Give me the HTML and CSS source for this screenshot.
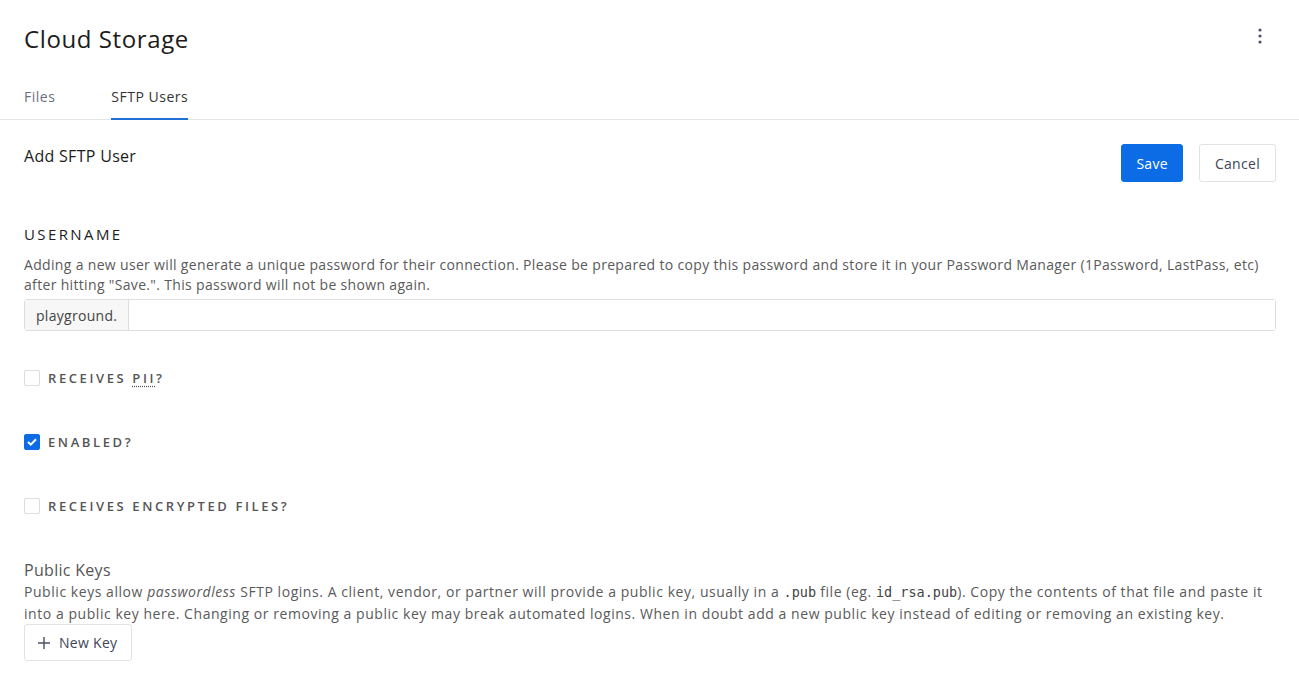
FILE: index.html
```html
<!DOCTYPE html>
<html lang="en">
<head>
  <meta charset="UTF-8">
  <meta name="viewport" content="width=device-width, initial-scale=1.0">
  <title>Cloud Storage</title>
  <link rel="stylesheet" href="styles.css">
</head>
<body>
  <header class="page-header">
    <div class="title-row">
      <h1>Cloud Storage</h1>
      <button class="kebab" aria-label="More">
        <svg width="4" height="16" viewBox="0 0 4 16"><circle cx="2" cy="2" r="1.6"/><circle cx="2" cy="8" r="1.6"/><circle cx="2" cy="14" r="1.6"/></svg>
      </button>
    </div>
    <nav class="tabs">
      <a class="tab">Files</a>
      <a class="tab active">SFTP Users</a>
    </nav>
  </header>

  <main class="content">
    <div class="form-head">
      <h2>Add SFTP User</h2>
      <div class="actions">
        <button class="btn btn-primary">Save</button>
        <button class="btn">Cancel</button>
      </div>
    </div>

    <section class="field">
      <label class="field-label">Username</label>
      <p class="help">Adding a new user will generate a unique password for their connection. Please be prepared to copy this password and store it in your Password Manager (1Password, LastPass, etc) after hitting "Save.". This password will not be shown again.</p>
      <div class="input-group">
        <span class="addon">playground.</span>
        <input type="text">
      </div>
    </section>

    <label class="check">
      <span class="box"></span>
      <span class="check-label">Receives <abbr title="Personally Identifiable Information">PII</abbr>?</span>
    </label>

    <label class="check">
      <span class="box checked">
        <svg width="10" height="8" viewBox="0 0 10 8"><path d="M1 4l2.8 2.6L9 1.3" fill="none" stroke="#fff" stroke-width="2"/></svg>
      </span>
      <span class="check-label">Enabled?</span>
    </label>

    <label class="check">
      <span class="box"></span>
      <span class="check-label">Receives encrypted files?</span>
    </label>

    <section class="keys">
      <h3>Public Keys</h3>
      <p class="help">Public keys allow <em>passwordless</em> SFTP logins. A client, vendor, or partner will provide a public key, usually in a <code>.pub</code> file (eg. <code>id_rsa.pub</code>). Copy the contents of that file and paste it into a public key here. Changing or removing a public key may break automated logins. When in doubt add a new public key instead of editing or removing an existing key.</p>
      <button class="btn btn-new">
        <svg width="12" height="12" viewBox="0 0 12 12"><path d="M6 0v12M0 6h12" stroke="#4a5063" stroke-width="1.4"/></svg>
        New Key
      </button>
    </section>
  </main>
</body>
</html>
```

FILE: styles.css
```css
body {
  margin: 0;
  font-family: "Open Sans", "Noto Sans", Arial, sans-serif;
  color: #222;
  background: #fff;
}
.page-header {
  border-bottom: 1px solid #e5e5e5;
}
.title-row {
  display: flex;
  justify-content: space-between;
  align-items: center;
  padding: 23px 24px 0 24px;
}
.title-row h1 {
  margin: 0;
  font-size: 24px;
  font-weight: 400;
  letter-spacing: 0.6px;
  line-height: 32px;
  color: #1c1c1c;
}
.kebab {
  border: none;
  background: none;
  padding: 0;
  margin: -4px 13px 0 0;
  fill: #4d5468;
  cursor: pointer;
}
.tabs {
  display: flex;
  gap: 56px;
  padding: 32px 24px 0 24px;
}
.tab {
  font-size: 14px;
  letter-spacing: 0.5px;
  color: #6b7081;
  padding-bottom: 11px;
  border-bottom: 2px solid transparent;
  margin-bottom: -1px;
  line-height: 20px;
}
.tab.active {
  color: #333;
  border-bottom-color: #1f6fd4;
}
.content {
  padding: 24px 23px 0 24px;
}
.form-head {
  display: flex;
  justify-content: space-between;
  align-items: flex-start;
}
.form-head h2 {
  margin: 0;
  font-size: 16px;
  font-weight: 400;
  letter-spacing: 0.3px;
  line-height: 24px;
  color: #1c1c1c;
}
.actions {
  display: flex;
  gap: 16px;
}
.btn {
  font-family: inherit;
  font-size: 14px;
  font-weight: 500;
  letter-spacing: 0.3px;
  height: 38px;
  padding: 0 15px;
  border: 1px solid #e2e2e2;
  border-radius: 3px;
  background: #fff;
  color: #404659;
  cursor: pointer;
}
.btn-primary {
  padding: 0 14px;
  background: #0b6ce6;
  border-color: #0b6ce6;
  color: #fff;
}
.field {
  margin-top: 42px;
}
.field-label {
  display: block;
  font-size: 15px;
  font-weight: 500;
  letter-spacing: 2.4px;
  text-transform: uppercase;
  color: #1e1e1e;
  line-height: 20px;
}
.help {
  margin: 11px 0 4px;
  font-size: 14px;
  letter-spacing: 0.33px;
  line-height: 20px;
  color: #5a5a5a;
}
.help code {
  font-family: "DejaVu Sans Mono", monospace;
  font-size: 13.5px;
  letter-spacing: 0;
  color: #444;
}
.input-group {
  display: flex;
  height: 32px;
  border: 1px solid #ddd;
  border-radius: 3px;
  box-sizing: border-box;
}
.addon {
  display: flex;
  align-items: center;
  padding: 0 11px;
  background: #f7f7f7;
  border-right: 1px solid #ddd;
  font-size: 14px;
  letter-spacing: 0.3px;
  color: #444;
}
.input-group input {
  flex: 1;
  border: none;
  outline: none;
}
.check {
  display: flex;
  align-items: center;
  gap: 8px;
  height: 16px;
  margin-top: 39px;
  cursor: pointer;
}
.check + .check {
  margin-top: 48px;
}
.box {
  width: 16px;
  height: 16px;
  box-sizing: border-box;
  border: 1px solid #ddd;
  border-radius: 2px;
  display: flex;
  align-items: center;
  justify-content: center;
}
.box.checked {
  background: #0b6ce6;
  border-color: #0b6ce6;
}
.check-label {
  font-size: 13px;
  font-weight: 600;
  letter-spacing: 2.6px;
  text-transform: uppercase;
  color: #555;
}
.check-label abbr {
  text-decoration: underline dotted;
  text-underline-offset: 3px;
}
.keys {
  margin-top: 46px;
}
.keys h3 {
  margin: 0;
  font-size: 16px;
  font-weight: 400;
  letter-spacing: 0.3px;
  line-height: 21px;
  color: #555;
}
.keys .help {
  margin: 0;
  letter-spacing: 0.55px;
  line-height: 21px;
}
.btn-new {
  height: 37px;
  padding: 0 14px 0 13px;
  display: flex;
  align-items: center;
  gap: 9px;
}
```
